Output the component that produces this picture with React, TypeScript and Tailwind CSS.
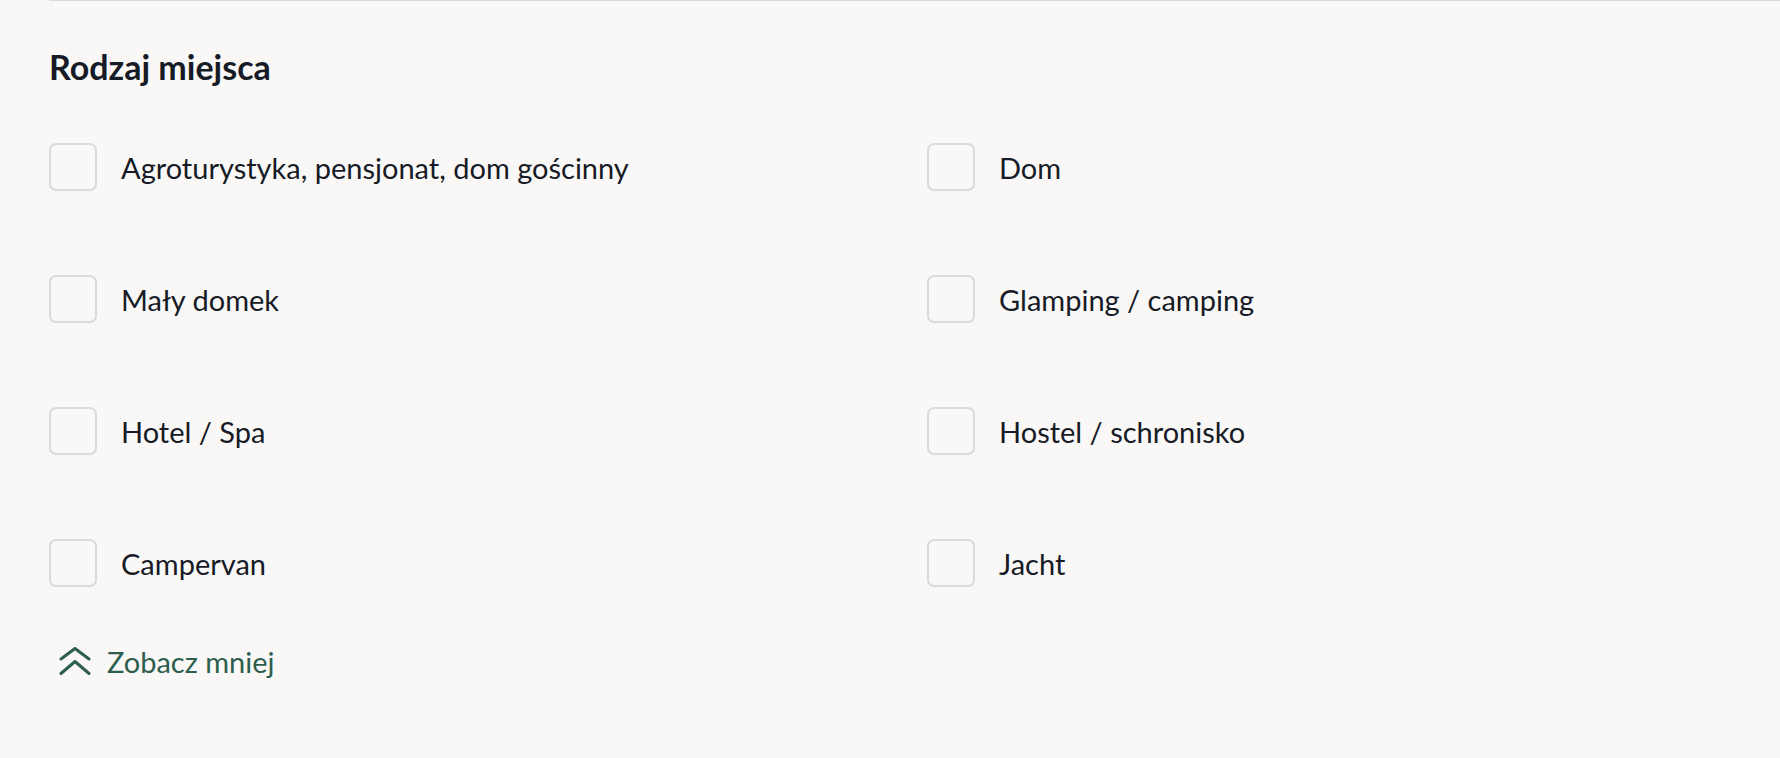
const items: string[] = [
  'Agroturystyka, pensjonat, dom gościnny',
  'Dom',
  'Mały domek',
  'Glamping / camping',
  'Hotel / Spa',
  'Hostel / schronisko',
  'Campervan',
  'Jacht',
];

function Checkbox({ label }: { label: string }) {
  return (
    <label className="flex h-12 cursor-pointer items-center gap-6">
      <span className="block h-12 w-12 shrink-0 rounded-[7px] border-2 border-[#dadada] bg-transparent" />
      <span className="text-[29px] leading-none text-[#161b26]">{label}</span>
    </label>
  );
}

export default function App() {
  return (
    <div className="min-h-screen bg-[#f9f8f7] pl-[49px] font-['Lato',sans-serif]">
      <div className="border-t border-[#d9d9d9]">
        {/* Section title */}
        <h2 className="pt-[49px] text-[34px] font-bold leading-none text-[#161b26]">Rodzaj miejsca</h2>

        {/* Options */}
        <div className="mt-[59px] grid grid-cols-[878px_1fr] gap-y-[84px]">
          {items.map((item) => (
            <Checkbox key={item} label={item} />
          ))}
        </div>

        {/* Toggle */}
        <button type="button" className="mt-[60px] flex h-7 items-center gap-4 pl-[10px] text-[#2e5e4e]">
          <svg width="32" height="28" viewBox="0 0 32 28" fill="none" stroke="currentColor" strokeWidth="3" strokeLinecap="round" strokeLinejoin="round">
            <path d="M2 12 L16 1.5 L30 12" />
            <path d="M2 26.5 L16 14.5 L30 26.5" />
          </svg>
          <span className="text-[29px] leading-none">Zobacz mniej</span>
        </button>
      </div>
    </div>
  );
}
